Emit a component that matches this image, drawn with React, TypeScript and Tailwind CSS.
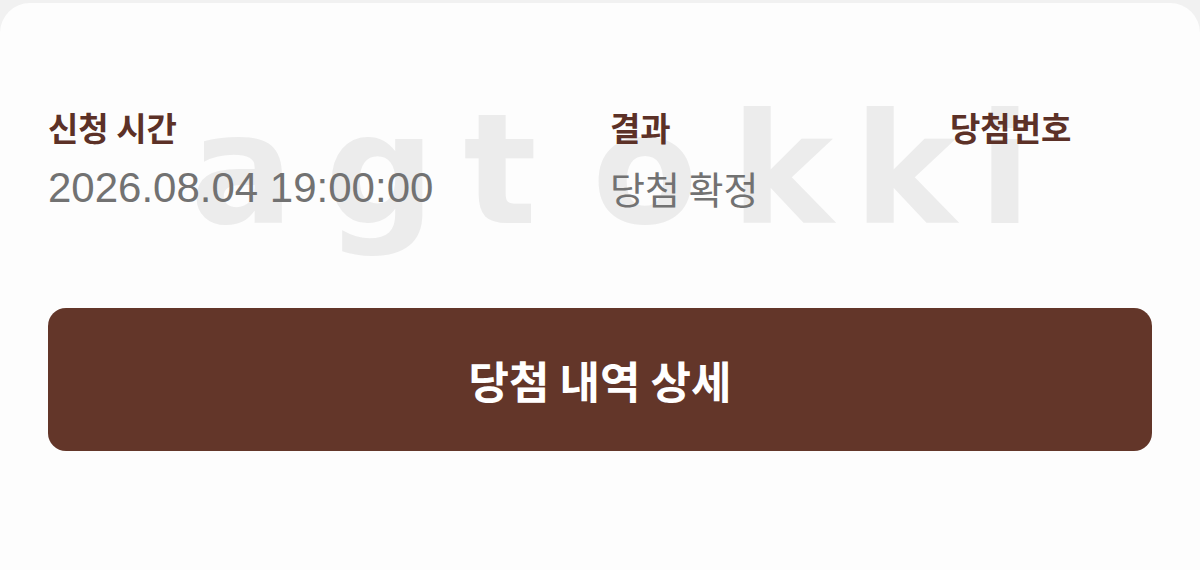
import React from 'react';

const fontStack = "font-['Liberation_Sans','Noto_Sans_CJK_KR',sans-serif]";

// watermark letters, each placed by its center on the card
const watermark = [
  { ch: 'a', cls: 'left-[242px]' },
  { ch: 'g', cls: 'left-[380px]' },
  { ch: 't', cls: 'left-[500px]' },
  { ch: 'o', cls: 'left-[645px]' },
  { ch: 'k', cls: 'left-[782px]' },
  { ch: 'k', cls: 'left-[905px]' },
  { ch: 'i', cls: 'left-[1005px]' },
];

const fields = [
  { label: '신청 시간', value: '2026.08.04 19:00:00', numeric: true },
  { label: '결과', value: '당첨 확정', numeric: false },
  { label: '당첨번호', value: '', numeric: false },
];

export default function App() {
  return (
    <div className={`h-[570px] w-[1200px] bg-[#f1f1f1] pt-[3px] ${fontStack}`}>
      <div className="relative h-full overflow-hidden rounded-t-[30px] bg-[#fdfdfd] px-12 pt-[101px]">
        <div className="pointer-events-none absolute inset-0 select-none">
          {watermark.map((w, i) => (
            <span
              key={i}
              className={`absolute top-[90px] -translate-x-1/2 font-['DejaVu_Sans',sans-serif] text-[154px] font-bold leading-none text-[#ececec] ${w.cls}`}
            >
              {w.ch}
            </span>
          ))}
        </div>

        <div className="relative grid grid-cols-[562px_340px_1fr]">
          {fields.map((f) => (
            <div key={f.label} className="flex flex-col">
              <span className="font-['Noto_Sans_CJK_KR',sans-serif] text-[33px] font-bold leading-[46px] text-[#5c3127]">
                {f.label}
              </span>
              <span
                className={
                  f.numeric
                    ? "mt-[14px] h-[48px] text-[42px] leading-[48px] text-[#727272]"
                    : "mt-[14px] h-[48px] font-['Noto_Sans_CJK_KR',sans-serif] text-[38px] leading-[48px] text-[#727272]"
                }
              >
                {f.value}
              </span>
            </div>
          ))}
        </div>

        <button className="relative mt-[96px] flex h-[143px] w-full items-center justify-center rounded-[18px] bg-[#633629] font-['Noto_Sans_CJK_KR',sans-serif] text-[44px] font-bold text-white">
          당첨 내역 상세
        </button>
      </div>
    </div>
  );
}
